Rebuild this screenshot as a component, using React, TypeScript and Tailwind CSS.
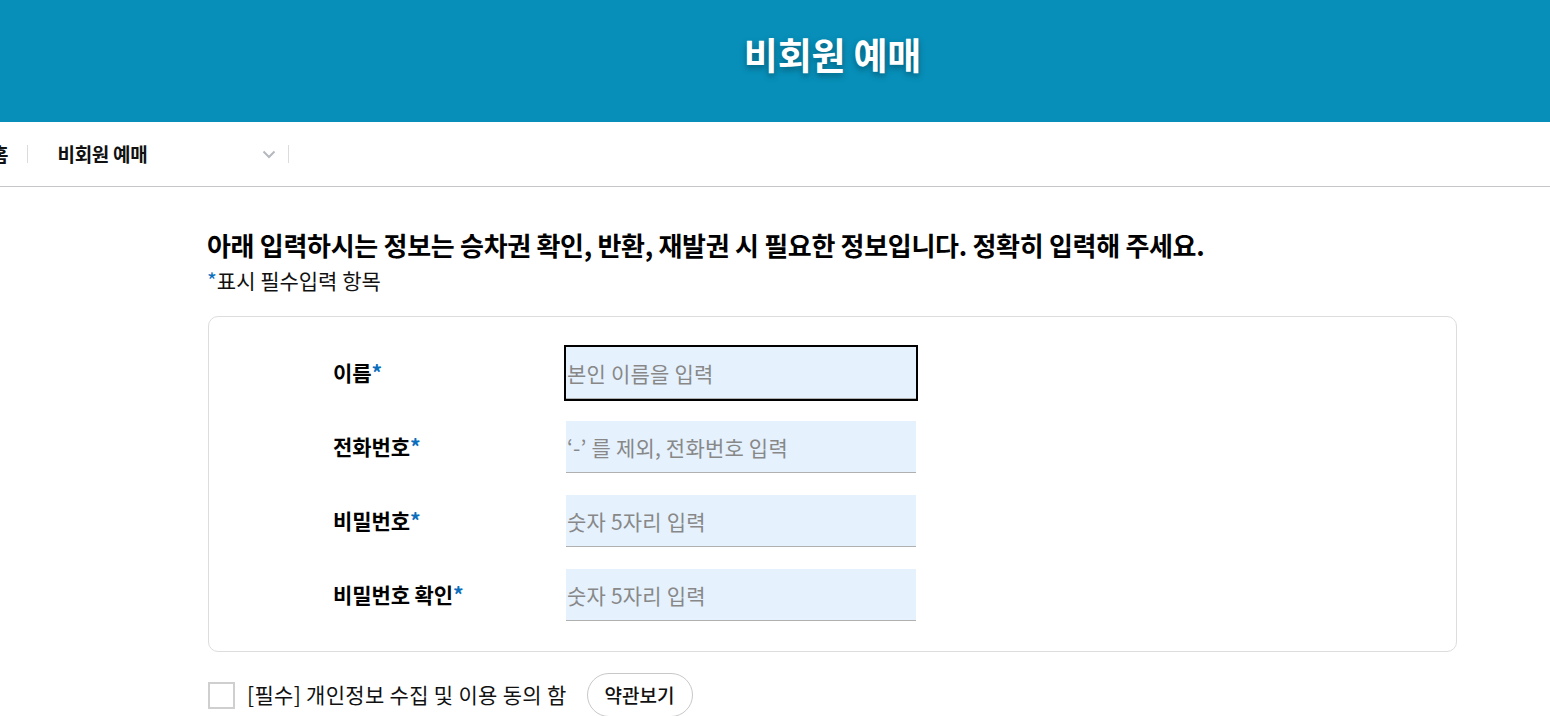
import React from "react";

const font = { fontFamily: '"Noto Sans CJK KR", "Noto Sans", sans-serif' };

function Row({ label, placeholder, focused }: { label: string; placeholder: string; focused?: boolean }) {
  return (
    <div className="flex items-center">
      <div className="w-[233px] shrink-0 text-[21px] font-bold text-black tracking-[-0.1px]">
        {label}
        <span className="text-[#0a6ebd]">*</span>
      </div>
      <input
        readOnly
        placeholder={placeholder}
        className={
          "h-[52px] w-[350px] bg-[#e5f1fd] border-0 border-b border-[#b0b0b0] pl-[1px] text-[21px] text-black placeholder:text-[#888888] tracking-[0.2px] " +
          (focused ? "outline-2 outline-black outline-offset-0" : "outline-none")
        }
        style={font}
      />
    </div>
  );
}

export default function App() {
  return (
    <div className="w-[1550px] h-[716px] overflow-hidden bg-white" style={font}>
      <header className="h-[122px] bg-[#078fb9]">
        <div className="ml-[208px] w-[1249px] h-full flex items-center justify-center">
          <h1 className="text-[37px] font-bold text-white tracking-[-0.2px] [text-shadow:0_3px_6px_rgba(0,0,0,0.35)] pb-[13px]">
            비회원 예매
          </h1>
        </div>
      </header>
      <nav className="h-[65px] border-b border-[#c5c6cc] flex items-center">
        <span className="-ml-[9px] text-[19px] font-bold text-[#111]">홈</span>
        <span className="ml-[19px] h-[18px] w-px bg-[#dcdcdc]" />
        <div className="ml-[29px] w-[231px] flex items-center justify-between">
          <span className="text-[19px] font-semibold text-[#111] tracking-[-0.3px]">비회원 예매</span>
          <svg width="14" height="9" viewBox="0 0 14 9" className="mr-[12px]">
            <polyline points="1.5,1.5 7,7 12.5,1.5" fill="none" stroke="#b5b8bd" strokeWidth="2" />
          </svg>
        </div>
        <span className="h-[18px] w-px bg-[#dcdcdc]" />
      </nav>
      <main className="ml-[208px] w-[1249px]">
        <h2 className="mt-[42px] text-[26px] leading-[32px] font-bold text-black tracking-[-0.3px] -ml-[1px]">
          아래 입력하시는 정보는 승차권 확인, 반환, 재발권 시 필요한 정보입니다. 정확히 입력해 주세요.
        </h2>
        <p className="mt-[5px] text-[21px] leading-[28px] text-[#111] -ml-[1px]">
          <span className="text-[#0a6ebd]">*</span>표시 필수입력 항목
        </p>
        <div className="mt-[22px] border border-[#dddddd] rounded-[10px] pl-[124px] pt-[30px] pb-[30px] flex flex-col gap-[22px]">
          <Row label="이름" placeholder="본인 이름을 입력" focused />
          <Row label="전화번호" placeholder="‘-’ 를 제외, 전화번호 입력" />
          <Row label="비밀번호" placeholder="숫자 5자리 입력" />
          <Row label="비밀번호 확인" placeholder="숫자 5자리 입력" />
        </div>
        <div className="mt-[21px] flex items-center">
          <span className="w-[27px] h-[27px] border-2 border-[#cfcfcf] bg-white" />
          <span className="ml-[12px] text-[21px] text-[#111] tracking-[0.3px]">[필수] 개인정보 수집 및 이용 동의 함</span>
          <button className="ml-[20px] h-[44px] w-[106px] rounded-full border border-[#c8c8c8] bg-white text-[19px] font-medium text-[#111]" style={font}>
            약관보기
          </button>
        </div>
      </main>
    </div>
  );
}
